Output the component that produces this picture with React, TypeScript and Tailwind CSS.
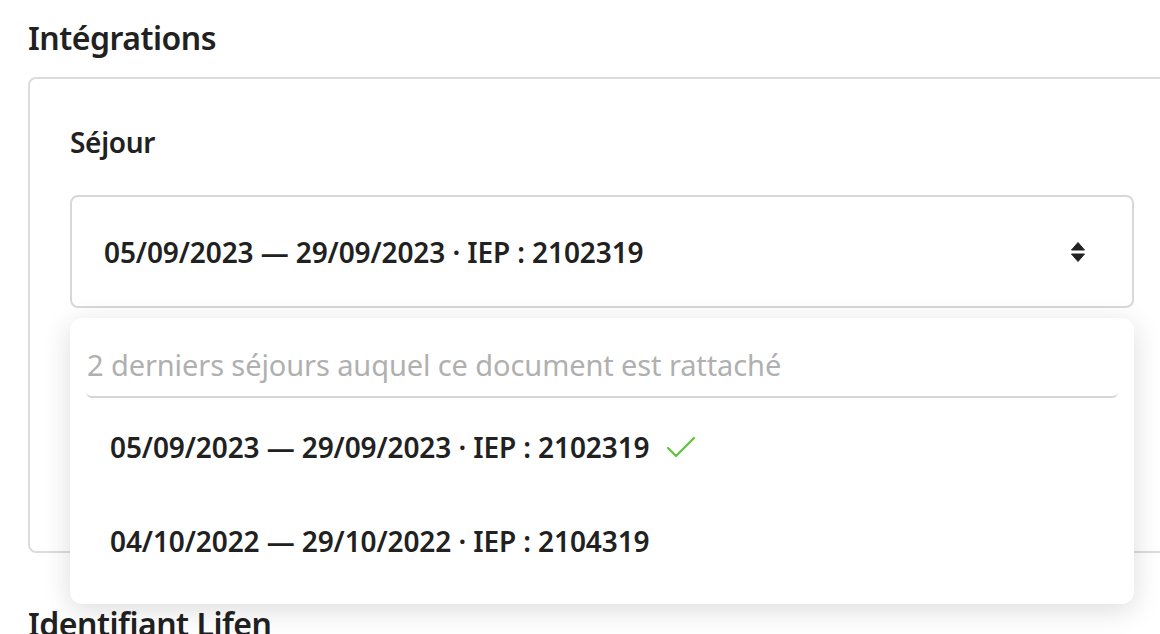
import React from "react";

const font = { fontFamily: '"Noto Sans", "Open Sans", sans-serif' };

function Arrows() {
  return (
    <svg width="16" height="24" viewBox="0 0 16 24" className="text-[#222]">
      <path d="M1.5 10 L8 2.5 L14.5 10 Z" fill="currentColor" strokeLinejoin="round" stroke="currentColor" strokeWidth="1" />
      <path d="M1.5 14 L14.5 14 L8 21.5 Z" fill="currentColor" strokeLinejoin="round" stroke="currentColor" strokeWidth="1" />
    </svg>
  );
}

function Check() {
  return (
    <svg width="30" height="24" viewBox="0 0 30 24" fill="none">
      <path d="M2 13 L10 21 L28 3" stroke="#5cc43a" strokeWidth="2.2" strokeLinecap="round" strokeLinejoin="round" />
    </svg>
  );
}

export default function App() {
  return (
    <div className="w-[1160px] h-[634px] overflow-hidden bg-white text-[#212121]" style={font}>
      <div className="pl-[28px] pt-[18px]">
        <h2 className="text-[32px] leading-[40px] font-semibold tracking-[-0.5px]">Intégrations</h2>
      </div>
      <div className="ml-[28px] mt-[19px] w-[1200px] h-[476px] border-2 border-[#dcdcdc] rounded-[8px] pl-[40px] pt-[44px]">
        <div className="text-[28px] leading-[38px] font-semibold tracking-[-0.3px]">Séjour</div>
        <div className="relative mt-[34px] w-[1064px]">
          <div className="h-[113px] border-2 border-[#d8d8d8] rounded-[8px] flex items-center justify-between pl-[32px] pr-[46px]">
            <span className="text-[28px] font-semibold tracking-[-0.1px]">05/09/2023 — 29/09/2023 · IEP : 2102319</span>
            <Arrows />
          </div>
          <div className="absolute left-0 top-[123px] w-[1064px] h-[286px] bg-white rounded-[12px] shadow-[0_6px_28px_rgba(0,0,0,0.14)] pt-[10px] px-[16px]">
            <div className="h-[70px] border-b-2 border-[#d6d6d6] rounded-b-[6px] flex items-center pt-[6px] pl-[1px]">
              <span className="text-[29px] text-[#b0b0b0] tracking-[-0.1px]">2 derniers séjours auquel ce document est rattaché</span>
            </div>
            <div className="mt-[2px] h-[94px] flex items-center pl-[24px] gap-[16px]">
              <span className="text-[28px] font-semibold tracking-[-0.1px]">05/09/2023 — 29/09/2023 · IEP : 2102319</span>
              <Check />
            </div>
            <div className="h-[94px] flex items-center pl-[24px]">
              <span className="text-[28px] font-semibold tracking-[-0.1px]">04/10/2022 — 29/10/2022 · IEP : 2104319</span>
            </div>
          </div>
        </div>
      </div>
      <div className="pl-[28px] mt-[51px]">
        <h2 className="text-[32px] leading-[40px] font-semibold tracking-[-0.5px]">Identifiant Lifen</h2>
      </div>
    </div>
  );
}
